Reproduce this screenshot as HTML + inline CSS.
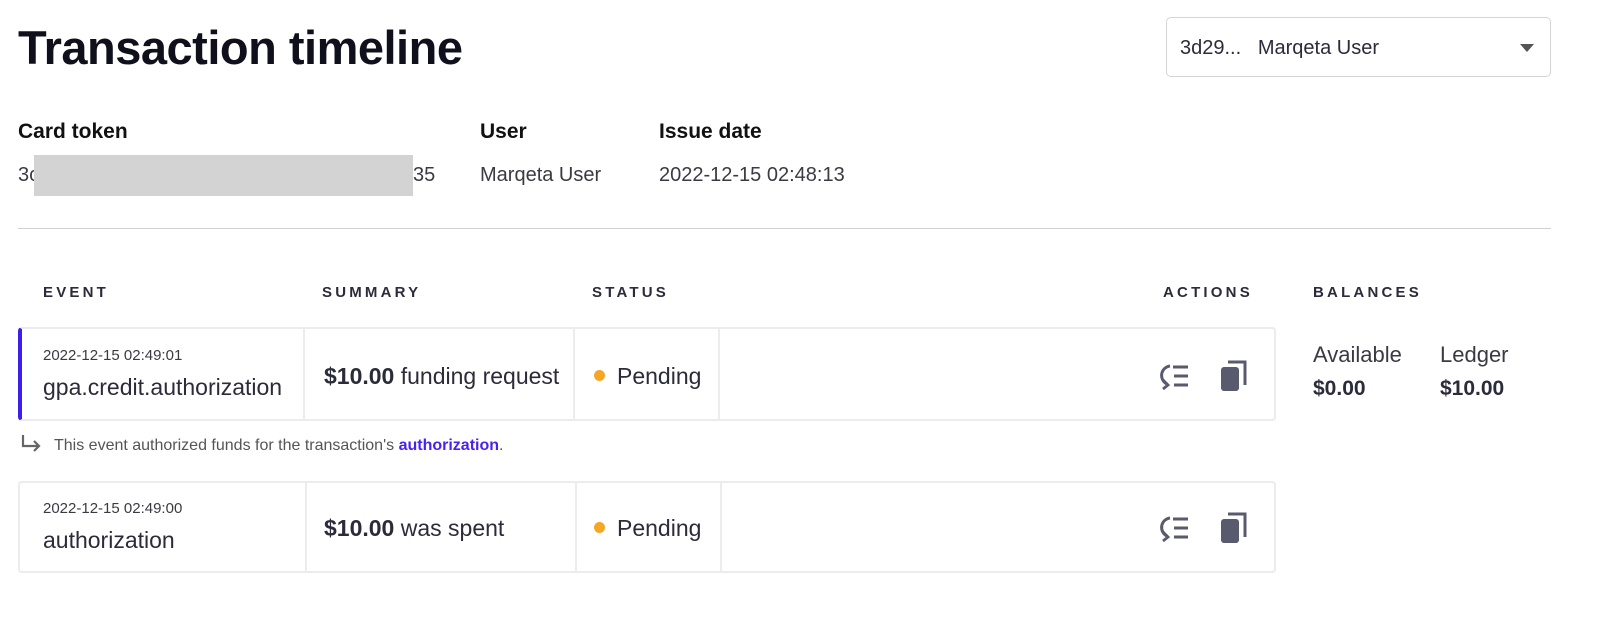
<!DOCTYPE html>
<html><head><style>
*{margin:0;padding:0;box-sizing:border-box}
body{width:1600px;height:621px;background:#fff;font-family:"Liberation Sans",sans-serif;color:#2b2b3a;position:relative;overflow:hidden}
.a{position:absolute;white-space:nowrap}
h1{position:absolute;left:18px;top:20px;font-size:47px;font-weight:bold;color:#10101c;letter-spacing:-0.5px}
.dd{left:1166px;top:17px;width:385px;height:60px;border:1px solid #d4d4d8;border-radius:5px}
.lbl{font-size:21px;font-weight:bold;color:#111}
.val{font-size:20px;color:#3a3a44}
.hd{font-size:15px;font-weight:bold;letter-spacing:3.2px;color:#2b2b3a}
.card{position:absolute;left:18px;width:1258px;border:2px solid #ececf0;border-radius:4px}
.div{position:absolute;top:0;bottom:0;width:2px;background:#ececf0}
.sm{font-size:15px;color:#3a3a44}
.ev{font-size:23px;color:#2b2b3a}
.dot{width:11px;height:11px;border-radius:50%;background:#f5a623}
</style></head><body>
<h1>Transaction timeline</h1>
<div class="a dd"></div>
<div class="a val" style="left:1180px;top:37px;color:#2b2b3a">3d29...&nbsp;&nbsp;&nbsp;Marqeta User</div>
<svg class="a" style="left:1520px;top:44px" width="14" height="8"><path d="M0 0H14L7 8Z" fill="#555"/></svg>

<div class="a lbl" style="left:18px;top:120px">Card token</div>
<div class="a lbl" style="left:480px;top:120px">User</div>
<div class="a lbl" style="left:659px;top:120px">Issue date</div>
<div class="a val" style="left:18px;top:164px">3c</div>
<div class="a" style="left:34px;top:155px;width:379px;height:41px;background:#d3d3d3"></div>
<div class="a val" style="left:413px;top:164px">35</div>
<div class="a val" style="left:480px;top:164px">Marqeta User</div>
<div class="a val" style="left:659px;top:164px">2022-12-15 02:48:13</div>
<div class="a" style="left:18px;top:228px;width:1533px;height:1px;background:#d0d0d4"></div>

<div class="a hd" style="left:43px;top:284px">EVENT</div>
<div class="a hd" style="left:322px;top:284px">SUMMARY</div>
<div class="a hd" style="left:592px;top:284px">STATUS</div>
<div class="a hd" style="left:1163px;top:284px">ACTIONS</div>
<div class="a hd" style="left:1313px;top:284px">BALANCES</div>

<div class="card" style="top:327px;height:94px;border-left:4px solid #3a1ff0">
<div class="div" style="left:281px"></div><div class="div" style="left:551px"></div><div class="div" style="left:696px"></div>
</div>
<div class="a sm" style="left:43px;top:347px">2022-12-15 02:49:01</div>
<div class="a ev" style="left:43px;top:374px">gpa.credit.authorization</div>
<div class="a ev" style="left:324px;top:363px"><b>$10.00</b> funding request</div>
<div class="a dot" style="left:594px;top:370px"></div>
<div class="a ev" style="left:617px;top:363px">Pending</div>

<svg class="a" style="left:20px;top:434px" width="22" height="20" fill="none" stroke="#666" stroke-width="2.2"><path d="M3 1V12H19M14 7L19 12L14 17"/></svg>
<div class="a" style="left:54px;top:437px;font-size:16px;color:#555">This event authorized funds for the transaction's <b style="color:#4a22f0">authorization</b>.</div>

<div class="card" style="top:481px;height:92px">
<div class="div" style="left:285px"></div><div class="div" style="left:555px"></div><div class="div" style="left:700px"></div>
</div>
<div class="a sm" style="left:43px;top:500px">2022-12-15 02:49:00</div>
<div class="a ev" style="left:43px;top:527px">authorization</div>
<div class="a ev" style="left:324px;top:515px"><b>$10.00</b> was spent</div>
<div class="a dot" style="left:594px;top:522px"></div>
<div class="a ev" style="left:617px;top:515px">Pending</div>

<svg width="0" height="0" style="position:absolute"><defs>
<g id="ic1" fill="none" stroke="#5a5a6e" stroke-width="3"><path d="M12 4A9.5 9.5 0 0 0 9 22"/><path d="M5 18L10 23L5 27" stroke-width="2.8"/><path d="M15 5H30M16 14H30M16 23H30"/></g>
<g id="ic2"><rect x="1" y="7" width="18" height="24" rx="3" fill="#5a5a6e"/><path d="M8 2H25V25" fill="none" stroke="#5a5a6e" stroke-width="3"/></g>
</defs></svg>
<svg class="a" style="left:1158px;top:362px" width="32" height="30"><use href="#ic1"/></svg>
<svg class="a" style="left:1220px;top:360px" width="28" height="33"><use href="#ic2"/></svg>
<svg class="a" style="left:1158px;top:514px" width="32" height="30"><use href="#ic1"/></svg>
<svg class="a" style="left:1220px;top:512px" width="28" height="33"><use href="#ic2"/></svg>

<div class="a" style="left:1313px;top:342px;font-size:22px;color:#3a3a44">Available</div>
<div class="a" style="left:1313px;top:377px;font-size:21px;font-weight:bold;color:#2b2b3a">$0.00</div>
<div class="a" style="left:1440px;top:342px;font-size:22px;color:#3a3a44">Ledger</div>
<div class="a" style="left:1440px;top:377px;font-size:21px;font-weight:bold;color:#2b2b3a">$10.00</div>
</body></html>
